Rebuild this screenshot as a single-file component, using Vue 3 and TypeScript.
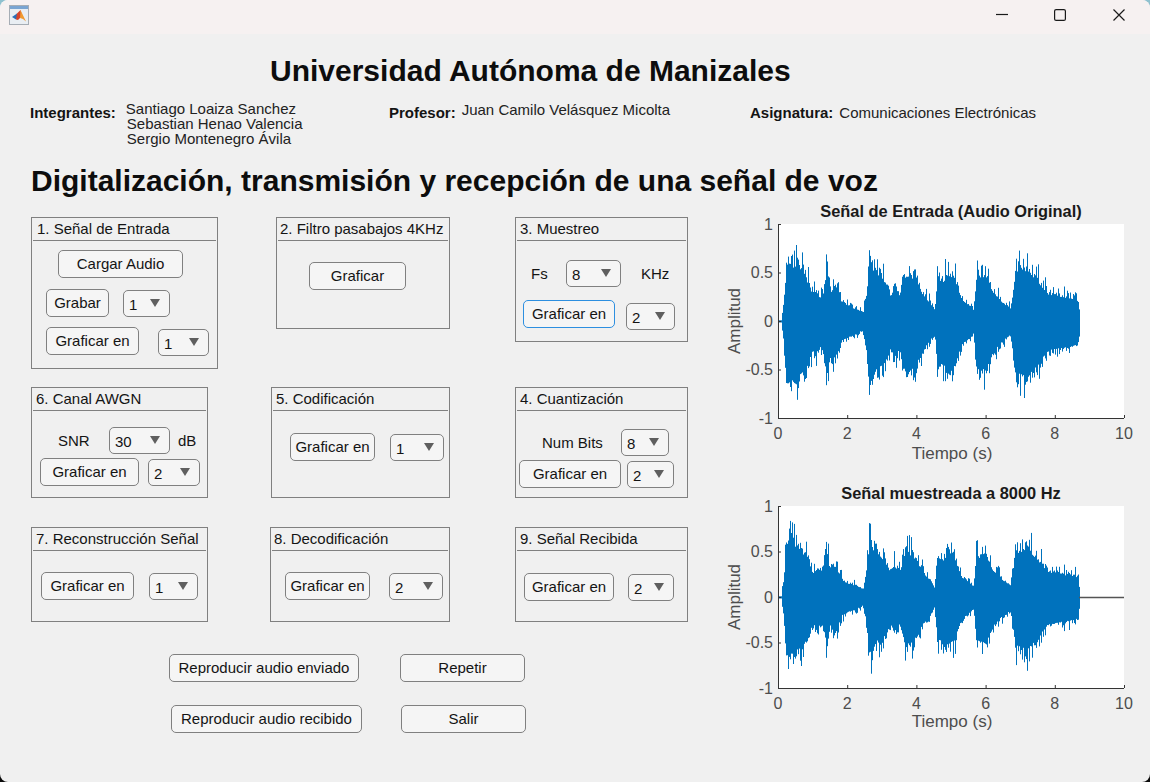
<script setup lang="ts">
interface Chart {
  title: string
  seed: number
  plotTop: number
  plotH: number
  tail: boolean
  labelOffset: number
}

const env: [number, number][] = [
  [0.1, 0.05], [0.15, 0.24], [0.25, 0.78], [0.35, 0.76], [0.5, 0.72], [0.7, 0.64], [0.9, 0.48], [1.0, 0.35],
  [1.1, 0.4], [1.2, 0.32], [1.3, 0.38], [1.4, 0.66], [1.5, 0.38], [1.6, 0.46], [1.7, 0.4], [1.85, 0.24],
  [2.0, 0.2], [2.2, 0.17], [2.45, 0.11], [2.55, 0.34], [2.62, 0.74], [2.72, 0.72], [2.85, 0.58], [3.0, 0.56],
  [3.15, 0.46], [3.25, 0.34], [3.35, 0.46], [3.5, 0.35], [3.65, 0.6], [3.8, 0.62], [4.0, 0.52], [4.2, 0.34],
  [4.4, 0.24], [4.52, 0.13], [4.6, 0.6], [4.75, 0.52], [4.9, 0.64], [5.1, 0.56], [5.3, 0.29], [5.5, 0.22],
  [5.65, 0.15], [5.72, 0.56], [5.85, 0.59], [6.0, 0.62], [6.2, 0.39], [6.5, 0.24], [6.72, 0.17], [6.85, 0.64],
  [7.2, 0.7], [7.5, 0.54], [7.8, 0.36], [8.0, 0.35], [8.3, 0.32], [8.6, 0.3], [8.68, 0.26], [8.72, 0.01]
]

function envAt(t: number): number {
  if (t <= env[0][0]) return 0.005
  for (let i = 1; i < env.length; i++) {
    if (t <= env[i][0]) {
      const [a, va] = env[i - 1]
      const [b, vb] = env[i]
      return va + ((vb - va) * (t - a)) / (b - a)
    }
  }
  return 0
}

const plotW = 346
const plotX = 58

function wave(c: Chart): string {
  let s = c.seed
  const rnd = () => {
    s = (s * 1664525 + 1013904223) % 4294967296
    return s / 4294967296
  }
  const mid = c.plotTop + c.plotH / 2
  const half = c.plotH / 2
  let d = ''
  for (let x = 0; x < (plotW * 8.72) / 10; x += 1) {
    const e = envAt((x / plotW) * 10)
    const r1 = rnd()
    const r2 = rnd()
    let up = e * (0.74 + 0.26 * r1 * r1)
    let dn = e * (0.82 + 0.26 * r2 * r2)
    if (rnd() > 0.93) up = e * 1.1
    if (rnd() > 0.93) dn = e * 1.16
    const px = Math.round(plotX + x) + 0.5
    d += `M${px} ${(mid - up * half).toFixed(1)}V${(mid + dn * half).toFixed(1)}`
  }
  return d
}

const charts: Chart[] = [
  { title: 'Señal de Entrada (Audio Original)', seed: 17, plotTop: 24, plotH: 194, tail: false, labelOffset: 41 },
  { title: 'Señal muestreada a 8000 Hz', seed: 4242, plotTop: 24, plotH: 182, tail: true, labelOffset: 39 }
]

const xTicks = [0, 2, 4, 6, 8, 10]
const yTicks = [1, 0.5, 0, -0.5, -1]
const xPos = (v: number) => plotX + (v / 10) * plotW
const yPos = (c: Chart, v: number) => c.plotTop + ((1 - v) / 2) * c.plotH
</script>

<template>
  <div class="window">
    <header class="titlebar">
      <svg class="app-icon" viewBox="0 0 20 20" width="20" height="20">
        <rect x="0.5" y="0.5" width="19" height="19" fill="#e9eef3" stroke="#a6adb5" />
        <rect x="1" y="1" width="18" height="3" fill="#7aa5d2" />
        <path d="M3 12L8 8.500L10 11L7 14.500z" fill="#2a6fb8" />
        <path d="M8 8.500L11.500 5L13 11L9 15L7 14.500z" fill="#d6442a" />
        <path d="M11.500 5L17 16.500L14 14L11 13z" fill="#f09a30" />
      </svg>
      <div class="win-controls">
        <svg viewBox="0 0 12 12" width="12" height="12"><path d="M0 5.500h12" /></svg>
        <svg viewBox="0 0 12 12" width="12" height="12"><rect x="0.6" y="0.6" width="10.800" height="10.800" rx="1.500" /></svg>
        <svg viewBox="0 0 12 12" width="12" height="12"><path d="M0.500 0.500l11 11M11.500 0.500l-11 11" /></svg>
      </div>
    </header>

    <main class="body">
      <h1 class="uni">Universidad Autónoma de Manizales</h1>

      <section class="info">
        <div class="info-block people">
          <b>Integrantes:</b>
          <div class="names">
            <span class="first">Santiago Loaiza Sanchez</span>
            <span>Sebastian Henao Valencia</span>
            <span>Sergio Montenegro Ávila</span>
          </div>
        </div>
        <div class="info-block teacher">
          <b>Profesor:</b>
          <span class="teacher-name">Juan Camilo Velásquez Micolta</span>
        </div>
        <div class="info-block subject">
          <b>Asignatura:</b>
          <span>Comunicaciones Electrónicas</span>
        </div>
      </section>

      <h2 class="heading">Digitalización, transmisión y recepción de una señal de voz</h2>

      <div class="columns">
        <div class="controls">
          <div class="panel-row r1">
            <section class="panel p1">
              <h3>1. Señal de Entrada</h3>
              <div class="line l11"><button class="w125">Cargar Audio</button></div>
              <div class="line l12">
                <button class="w63">Grabar</button>
                <div class="drop w47">1</div>
              </div>
              <div class="line l13">
                <button class="w93">Graficar en</button>
                <div class="drop w51">1</div>
              </div>
            </section>
            <section class="panel p2">
              <h3>2. Filtro pasabajos 4KHz</h3>
              <div class="line l21"><button class="w97">Graficar</button></div>
            </section>
            <section class="panel p3">
              <h3>3. Muestreo</h3>
              <div class="line l31">
                <span class="lbl fs">Fs</span>
                <div class="drop w55">8</div>
                <span class="lbl khz">KHz</span>
              </div>
              <div class="line l32">
                <button class="w92 focus">Graficar en</button>
                <div class="drop w49">2</div>
              </div>
            </section>
          </div>

          <div class="panel-row r2">
            <section class="panel p6">
              <h3>6. Canal AWGN</h3>
              <div class="line l61">
                <span class="lbl snr">SNR</span>
                <div class="drop w61">30</div>
                <span class="lbl db">dB</span>
              </div>
              <div class="line l62">
                <button class="w99">Graficar en</button>
                <div class="drop w52">2</div>
              </div>
            </section>
            <section class="panel p5">
              <h3>5. Codificación</h3>
              <div class="line l51">
                <button class="w85">Graficar en</button>
                <div class="drop w54">1</div>
              </div>
            </section>
            <section class="panel p4">
              <h3>4. Cuantización</h3>
              <div class="line l41">
                <span class="lbl bits">Num Bits</span>
                <div class="drop w48">8</div>
              </div>
              <div class="line l42">
                <button class="w102">Graficar en</button>
                <div class="drop w47">2</div>
              </div>
            </section>
          </div>

          <div class="panel-row r3">
            <section class="panel p7">
              <h3>7. Reconstrucción Señal</h3>
              <div class="line l71">
                <button class="w93">Graficar en</button>
                <div class="drop w49">1</div>
              </div>
            </section>
            <section class="panel p8">
              <h3>8. Decodificación</h3>
              <div class="line l81">
                <button class="w85">Graficar en</button>
                <div class="drop w54">2</div>
              </div>
            </section>
            <section class="panel p9">
              <h3>9. Señal Recibida</h3>
              <div class="line l91">
                <button class="w90">Graficar en</button>
                <div class="drop w46">2</div>
              </div>
            </section>
          </div>

          <div class="actions a1">
            <button class="w190">Reproducir audio enviado</button>
            <button class="w125">Repetir</button>
          </div>
          <div class="actions a2">
            <button class="w191">Reproducir audio recibido</button>
            <button class="w125">Salir</button>
          </div>
        </div>

        <div class="plots">
          <svg
            v-for="c in charts"
            :key="c.title"
            class="chart"
            :class="{ second: c.tail }"
            width="420"
            :height="c.plotTop + c.plotH + 48"
          >
            <text class="c-title" :x="plotX + plotW / 2" y="17">{{ c.title }}</text>
            <rect :x="plotX" :y="c.plotTop" :width="plotW" :height="c.plotH" fill="#fff" />
            <path
              :d="`M${plotX} ${yPos(c, 0) + 0.5}H${plotX + plotW * 0.87}`"
              stroke="#0072bd"
              stroke-width="2"
              fill="none"
            />
            <path :d="wave(c)" stroke="#0072bd" stroke-width="1" fill="none" />
            <path
              v-if="c.tail"
              :d="`M${xPos(8.7)} ${yPos(c, 0) + 0.5}H${plotX + plotW}`"
              stroke="#555"
              stroke-width="1.4"
              fill="none"
            />
            <path
              :d="`M${plotX + 0.5} ${c.plotTop}V${c.plotTop + c.plotH + 0.5}H${plotX + plotW}`"
              stroke="#333"
              fill="none"
            />
            <g v-for="t in xTicks" :key="t">
              <path :d="`M${xPos(t) + 0.5} ${c.plotTop + c.plotH}v-3`" stroke="#333" />
              <text class="tick" text-anchor="middle" :x="xPos(t)" :y="c.plotTop + c.plotH + 21">{{ t }}</text>
            </g>
            <g v-for="t in yTicks" :key="t">
              <path :d="`M${plotX} ${yPos(c, t) + 0.5}h3`" stroke="#333" />
              <text class="tick" text-anchor="end" :x="plotX - 5" :y="yPos(c, t) + 5.500">{{ t }}</text>
            </g>
            <text class="axis" text-anchor="middle" :x="plotX + plotW / 2 + 1" :y="c.plotTop + c.plotH + c.labelOffset">Tiempo (s)</text>
            <text
              class="axis"
              text-anchor="middle"
              :transform="`translate(20 ${c.plotTop + c.plotH / 2}) rotate(-90)`"
            >Amplitud</text>
          </svg>
        </div>
      </div>
    </main>
  </div>
</template>

<style>
html,
body {
  margin: 0;
  height: 100%;
  overflow: hidden;
  background: linear-gradient(#8fc1cf 0 100px, #0b0b0b 100px);
}
</style>

<style scoped>
.window {
  width: 1150px;
  height: 782px;
  border-radius: 8px;
  overflow: hidden;
  background: #f0f0f0;
  font-family: "Liberation Sans", Arial, sans-serif;
  color: #141414;
  font-size: 15px;
}
.titlebar {
  height: 34px;
  background: #f6f1f1;
  display: flex;
  align-items: center;
  justify-content: space-between;
  padding: 0 25px 4px 9px;
  box-sizing: border-box;
}
.app-icon {
  display: block;
}
.win-controls {
  display: flex;
  gap: 46px;
}
.win-controls svg {
  display: block;
  fill: none;
  stroke: #1a1a1a;
  stroke-width: 1.2;
}
.win-controls svg:nth-child(2) {
  margin-right: 1px;
}
.body {
  display: flex;
  flex-direction: column;
}
.uni {
  margin: 18px 0 0 270px;
  font-size: 30px;
  line-height: 37px;
  font-weight: 700;
  color: #0d0d0d;
}
.info {
  display: flex;
  margin: 12px 0 0 30px;
  height: 45px;
}
.info-block {
  display: flex;
  align-items: flex-start;
}
.info-block b {
  margin-top: 4px;
  line-height: 16px;
}
.people {
  width: 359px;
}
.names {
  display: flex;
  flex-direction: column;
  margin-left: 10px;
  line-height: 15px;
  color: #222;
}
.names span {
  margin-left: 1px;
}
.names .first {
  margin-left: 0;
}
.teacher {
  width: 361px;
}
.teacher b {
  margin-right: 6px;
}
.teacher-name {
  line-height: 16px;
  margin-top: 1px;
  color: #222;
}
.subject span {
  margin: 4px 0 0 6px;
  line-height: 16px;
  color: #222;
}
.heading {
  margin: 16px 0 0 31px;
  font-size: 30px;
  line-height: 37px;
  font-weight: 700;
  color: #0d0d0d;
  white-space: nowrap;
}
.columns {
  display: flex;
}
.controls {
  width: 720px;
  padding: 18px 0 0 31px;
  box-sizing: border-box;
}
.panel-row {
  display: flex;
  align-items: flex-start;
}
.r1 {
  height: 170px;
}
.r2 {
  height: 140px;
}
.r3 {
  height: 126px;
}
.panel {
  box-sizing: border-box;
  border: 1px solid #808080;
  flex: none;
}
.panel h3 {
  margin: 0 1px;
  padding-left: 3px;
  height: 22px;
  line-height: 22px;
  font-size: 15px;
  font-weight: 400;
  border-bottom: 1px solid #808080;
  box-sizing: content-box;
  white-space: nowrap;
  color: #141414;
}
.p1 h3 {
  padding-left: 4px;
}
.p2 h3,
.p8 h3 {
  padding-left: 2px;
}
.p1 {
  width: 187px;
  height: 152px;
}
.p2 {
  width: 174px;
  height: 112px;
  margin-left: 58px;
}
.p3 {
  width: 173px;
  height: 125px;
  margin-left: 65px;
}
.p6,
.p7 {
  width: 177px;
}
.p6 {
  height: 111px;
}
.p5 {
  width: 179px;
  height: 111px;
  margin-left: 63px;
}
.p4 {
  width: 173px;
  height: 111px;
  margin-left: 65px;
}
.p7 {
  height: 95px;
}
.p8 {
  width: 180px;
  height: 95px;
  margin-left: 62px;
}
.p9 {
  width: 173px;
  height: 95px;
  margin-left: 65px;
}
.line {
  display: flex;
  align-items: center;
}
button {
  box-sizing: border-box;
  height: 28px;
  border: 1px solid #808080;
  border-radius: 5px;
  background: #f5f5f5;
  font: 15px "Liberation Sans", Arial, sans-serif;
  color: #141414;
  padding: 0 0 2px;
  white-space: nowrap;
  flex: none;
}
button.focus {
  border-color: #2d8fe0;
}
.drop {
  position: relative;
  box-sizing: border-box;
  height: 27px;
  border: 1px solid #808080;
  border-radius: 5px;
  background: #f5f5f5;
  padding: 5px 0 0 5px;
  line-height: 18px;
  flex: none;
}
.drop::after {
  content: "";
  position: absolute;
  right: 9px;
  top: 8px;
  border-left: 5px solid transparent;
  border-right: 5px solid transparent;
  border-top: 8px solid #5f5f5f;
}
.lbl {
  flex: none;
}
.w46 { width: 46px; }
.w47 { width: 47px; }
.w48 { width: 48px; }
.w49 { width: 49px; }
.w51 { width: 51px; }
.w52 { width: 52px; }
.w54 { width: 54px; }
.w55 { width: 55px; }
.w61 { width: 61px; }
.w63 { width: 63px; }
.w85 { width: 85px; }
.w90 { width: 90px; }
.w92 { width: 92px; }
.w93 { width: 93px; }
.w97 { width: 97px; }
.w99 { width: 99px; }
.w102 { width: 102px; }
.w125 { width: 125px; }
.w190 { width: 190px; }
.w191 { width: 191px; }

.l11 { margin: 9px 0 0 26px; }
.l12 { margin: 11px 0 0 14px; gap: 14px; }
.l13 { margin: 10px 0 0 14px; gap: 19px; align-items: flex-start; }
.l13 .drop { margin-top: 2px; }
.l21 { margin: 21px 0 0 32px; }
.l31 { margin: 19px 0 0 15px; }
.fs { width: 35px; }
.khz { margin-left: 20px; }
.l32 { margin: 13px 0 0 7px; gap: 11px; align-items: flex-start; }
.l32 .drop { margin-top: 3px; }
.l61 { margin: 16px 0 0 26px; }
.snr { width: 51px; }
.db { margin-left: 8px; }
.l62 { margin: 4px 0 0 8px; gap: 9px; }
.l51 { margin: 22px 0 0 18px; gap: 15px; }
.l41 { margin: 18px 0 0 26px; }
.bits { width: 79px; }
.l42 { margin: 4px 0 0 3px; gap: 6px; }
.l71 { margin: 21px 0 0 9px; gap: 15px; }
.l81 { margin: 21px 0 0 14px; gap: 19px; }
.l91 { margin: 22px 0 0 8px; gap: 14px; }

.actions {
  display: flex;
}
.a1 {
  margin: 1px 0 0 138px;
  gap: 41px;
}
.a2 {
  margin: 23px 0 0 140px;
  gap: 39px;
}
.plots {
  flex: none;
  padding: 0;
  margin-top: 1px;
}
.chart {
  display: block;
}
.chart.second {
  margin-top: 16px;
}
.c-title {
  font-size: 16.4px;
  font-weight: 700;
  text-anchor: middle;
  fill: #1a1a1a;
}
.tick {
  font-size: 16px;
  fill: #4d4d4d;
}
.axis {
  font-size: 17px;
  fill: #4d4d4d;
}
</style>
